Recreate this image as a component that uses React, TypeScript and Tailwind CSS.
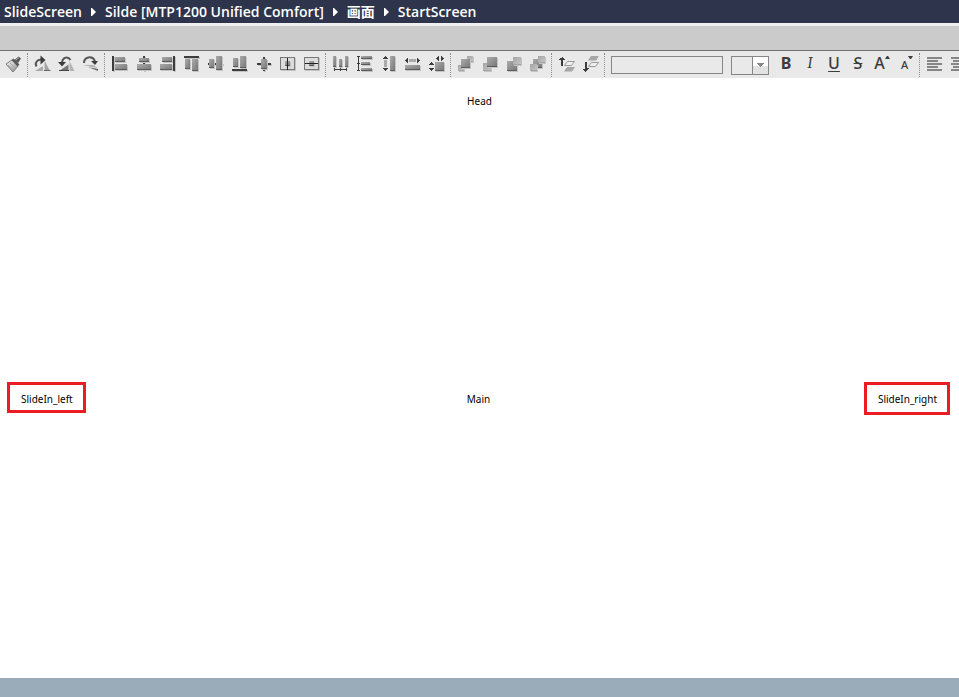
import type { ReactNode } from 'react';

const DARK = '#3c3c3c';

function Block({ x, y, w, h, light }: { x: number; y: number; w: number; h: number; light?: boolean }) {
  return (
    <g>
      <rect x={x + 1} y={y + 1} width={w} height={h} fill="#c4c4c4" />
      <rect x={x} y={y} width={w} height={h} fill={light ? 'url(#pale)' : 'url(#steel)'} />
      <rect x={x} y={y + h - 1} width={w} height={1} fill={light ? '#a4a4a4' : '#5c5c5c'} />
    </g>
  );
}

function Bar({ x, y, w, h }: { x: number; y: number; w: number; h: number }) {
  return (
    <g>
      <rect x={x + 1} y={y + 1} width={w} height={h} fill="#c4c4c4" />
      <rect x={x} y={y} width={w} height={h} fill={DARK} />
    </g>
  );
}

function Tool({ label, children }: { label: string; children: ReactNode }) {
  return (
    <button type="button" aria-label={label} title={label} className="block h-6 w-6 shrink-0">
      <svg viewBox="0 0 24 24" className="block h-6 w-6" shapeRendering="crispEdges" aria-hidden="true">
        {children}
      </svg>
    </button>
  );
}

function Letter({ label, children }: { label: string; children: ReactNode }) {
  return (
    <button
      type="button"
      aria-label={label}
      title={label}
      className="flex h-6 w-6 shrink-0 items-center justify-center text-base leading-6 font-medium text-[#3c3c3c]"
    >
      {children}
    </button>
  );
}

function Divider() {
  return <span className="mr-[3px] ml-px h-6 w-0 shrink-0 self-center border-l border-dotted border-[#8c8c8c]" />;
}

function Chevron() {
  return (
    <svg viewBox="0 0 5 8" className="h-2 w-[5px] shrink-0" fill="#fff" aria-hidden="true">
      <path d="M0 0h1l4 4-4 4H0z" />
    </svg>
  );
}

function Gradients() {
  return (
    <svg className="absolute h-0 w-0" aria-hidden="true">
      <defs>
        <linearGradient id="steel" x1="0" y1="0" x2="1" y2="1">
          <stop offset="0" stopColor="#ababab" />
          <stop offset="1" stopColor="#767676" />
        </linearGradient>
        <linearGradient id="pale" x1="0" y1="0" x2="1" y2="1">
          <stop offset="0" stopColor="#a4a4a4" />
          <stop offset="1" stopColor="#c6c6c6" />
        </linearGradient>
        <linearGradient id="brush" x1="0" y1="0" x2="1" y2="1">
          <stop offset="0" stopColor="#ffffff" />
          <stop offset="1" stopColor="#8a8a8a" />
        </linearGradient>
      </defs>
    </svg>
  );
}

function Toolbar() {
  return (
    <div role="toolbar" aria-label="Format" className="flex h-[27px] items-start overflow-hidden bg-[#e9e9e9] pl-0.5">
      <Tool label="Format painter">
        <g shapeRendering="auto">
          <path d="M4 13l6-4 6 6-5 6z" fill="url(#brush)" stroke="#7a7a7a" />
          <path d="M6 14l5 5M8 12l5 5" stroke="#a6a6a6" />
          <path d="M9.500 9l2-1.500 6 6-2 2z" fill="#5a5a5a" />
          <path d="M12.500 9l4-3.500 2.500 2-3 4.500z" fill="#555" />
          <path d="M14 9l3-2.500" stroke="#aaa" />
        </g>
      </Tool>
      <Divider />
      <Tool label="Rotate right">
        <g shapeRendering="auto">
          <path d="M4 20L12 15v5z" fill="#a9a9a9" />
          <path d="M13.500 9.500V20H19z" fill="#a4a4a4" />
          <path d="M13 19.500h6.500" stroke="#666" />
          <path d="M5.500 15.500C3.500 12 6 8.500 10 8.500" fill="none" stroke="#555" strokeWidth="2" />
          <path d="M9.500 4.500l5 4.500-5 4.500z" fill={DARK} />
        </g>
      </Tool>
      <Tool label="Rotate left">
        <g shapeRendering="auto">
          <path d="M4 20L13.500 13.500V20z" fill="#777" />
          <path d="M14.500 10v10h5z" fill="#b4b4b4" />
          <path d="M4 19.500h10" stroke="#444" />
          <path d="M15.500 9C13 5 8 6 7 11" fill="none" stroke="#555" strokeWidth="2" />
          <path d="M3 11h8l-4 4.500z" fill={DARK} />
        </g>
      </Tool>
      <Tool label="Rotate by angle">
        <g shapeRendering="auto">
          <path d="M4 14h10l5 3z" fill="#ababab" />
          <path d="M9 16L19 18v2z" fill="#666" />
          <path d="M5 12C5 6 13 4 16 10" fill="none" stroke="#555" strokeWidth="2" />
          <path d="M12 10h7l-3 4z" fill={DARK} />
        </g>
      </Tool>
      <Divider />
      <Tool label="Align left">
        <Bar x={4} y={5} w={2} h={15} />
        <Block x={7} y={6} w={10} h={5} />
        <Block x={7} y={13} w={12} h={6} />
      </Tool>
      <Tool label="Align center">
        <Bar x={11} y={5} w={2} h={15} />
        <Block x={7} y={7} w={10} h={4} />
        <Block x={5} y={13} w={14} h={6} />
      </Tool>
      <Tool label="Align right">
        <Bar x={17} y={5} w={2} h={15} />
        <Block x={6} y={6} w={10} h={5} />
        <Block x={4} y={13} w={12} h={6} />
      </Tool>
      <Tool label="Align top">
        <Bar x={4} y={5} w={15} h={2} />
        <Block x={5} y={8} w={5} h={10} />
        <Block x={12} y={8} w={6} h={12} />
      </Tool>
      <Tool label="Align middle">
        <Bar x={4} y={12} w={15} h={2} />
        <Block x={5} y={8} w={5} h={9} />
        <Block x={12} y={5} w={6} h={14} />
      </Tool>
      <Tool label="Align bottom">
        <Block x={5} y={7} w={5} h={9} />
        <Block x={12} y={5} w={6} h={12} />
        <Bar x={4} y={18} w={15} h={2} />
      </Tool>
      <Tool label="Center both ways">
        <Bar x={5} y={12} w={14} h={2} />
        <Bar x={11} y={6} w={2} h={14} />
        <Block x={9} y={8} w={6} h={10} />
      </Tool>
      <Tool label="Center horizontally">
        <rect x="5" y="7" width="15" height="13" fill="#c4c4c4" />
        <rect x="4.500" y="6.500" width="14" height="12" fill="#dcdcdc" stroke="#777" />
        <Block x={9} y={10} w={5} h={5} />
        <rect x="11" y="7" width="1" height="12" fill="#222" />
      </Tool>
      <Tool label="Center vertically">
        <rect x="5" y="7" width="15" height="13" fill="#c4c4c4" />
        <rect x="4.500" y="6.500" width="14" height="12" fill="#dcdcdc" stroke="#777" />
        <Block x={9} y={10} w={5} h={5} />
        <rect x="5" y="12" width="13" height="1" fill="#222" />
      </Tool>
      <Divider />
      <Tool label="Distribute horizontally">
        <Block x={4} y={5} w={3} h={11} />
        <Block x={10} y={8} w={3} h={8} />
        <Block x={16} y={5} w={3} h={11} />
        <path d="M5 18.500h13M5.500 17v3M11.500 17v3M17.500 17v3" stroke={DARK} />
      </Tool>
      <Tool label="Distribute vertically">
        <path d="M5.500 5v15M4 5.500h3M4 12.500h3M4 19.500h3" stroke={DARK} />
        <Block x={8} y={5} w={11} h={3} />
        <Block x={8} y={11} w={9} h={3} />
        <Block x={8} y={17} w={11} h={3} />
      </Tool>
      <Tool label="Same height">
        <rect x="7" y="9" width="3" height="7" fill="#aaa" />
        <path d="M8 5h1v1h1v1h1v1H6V7h1V6h1zM6 17h5v1h-1v1H9v1H8v-1H7v-1H6z" fill={DARK} />
        <Block x={13} y={5} w={5} h={15} />
      </Tool>
      <Tool label="Same width">
        <rect x="8" y="8" width="7" height="3" fill="#aaa" />
        <path d="M4 9h1V8h1V7h1v5H6v-1H5v-1H4zM19 9h-1V8h-1V7h-1v5h1v-1h1v-1h1z" fill={DARK} />
        <Block x={4} y={14} w={15} h={5} />
      </Tool>
      <Tool label="Same size">
        <Block x={10} y={11} w={9} h={9} />
        <path d="M11 7h1V6h1V5h1v5h-1V9h-1V8h-1zM19 7h-1V6h-1V5h-1v5h1V9h1V8h1z" fill={DARK} />
        <path d="M6 11h1v1h1v1h1v1H4v-1h1v-1h1zM4 17h5v1H8v1H7v1H6v-1H5v-1H4z" fill={DARK} />
      </Tool>
      <Divider />
      <Tool label="Bring forward">
        <Block x={13} y={5} w={6} h={6} light />
        <Block x={4} y={14} w={6} h={6} light />
        <Block x={7} y={8} w={9} h={9} />
      </Tool>
      <Tool label="Bring to front">
        <Block x={5} y={12} w={8} h={8} light />
        <Block x={9} y={6} w={10} h={10} />
      </Tool>
      <Tool label="Send to back">
        <Block x={5} y={10} w={10} h={10} />
        <Block x={11} y={6} w={8} h={8} light />
      </Tool>
      <Tool label="Send backward">
        <Block x={7} y={8} w={9} h={9} />
        <Block x={12} y={5} w={7} h={7} light />
        <Block x={4} y={13} w={7} h={7} light />
      </Tool>
      <Divider />
      <Tool label="Layer up">
        <path d="M7 6h1v1h1v1h1v1H8v6H6V9H4V8h1V7h2z" fill={DARK} />
        <g shapeRendering="auto">
          <path d="M12.500 10.500h7l-3 4h-7z" fill="#f0f0f0" stroke="#999" />
          <path d="M12 16h8l-3 4.500H9z" fill="#a6a6a6" />
        </g>
      </Tool>
      <Tool label="Layer down">
        <path d="M6 11h2v6h2v1H9v1H8v1H7v1H6v-1H5v-1H4v-1h2z" fill={DARK} />
        <g shapeRendering="auto">
          <path d="M12 5h8l-3 4.500H9z" fill="#a6a6a6" />
          <path d="M12.500 11.500h7l-3 4h-7z" fill="#f0f0f0" stroke="#999" />
        </g>
      </Tool>
      <Divider />

      <input
        type="text"
        aria-label="Font family"
        className="mt-[5px] ml-[3px] h-[18px] w-28 shrink-0 border border-[#868686] bg-transparent px-1 text-xs outline-none"
      />
      <div className="relative mt-[5px] mr-[5px] ml-2 flex h-[19px] w-[38px] shrink-0 justify-end border border-[#868686]">
        <select aria-label="Font size" className="absolute inset-0 appearance-none bg-transparent text-xs outline-none">
          <option value="" />
          <option>12</option>
        </select>
        <svg
          viewBox="0 0 15 17"
          className="pointer-events-none h-full w-4 border-l border-[#868686] bg-linear-to-b from-white from-50% to-[#e2e2e2] to-50%"
          shapeRendering="crispEdges"
          aria-hidden="true"
        >
          <path d="M4 6h7v1h-1v1H9v1H8v1H7V9H6V8H5V7H4z" fill="#868686" />
        </svg>
      </div>

      <Letter label="Bold"><b>B</b></Letter>
      <Letter label="Italic"><i className="font-serif">I</i></Letter>
      <Letter label="Underline"><span className="underline underline-offset-2">U</span></Letter>
      <Letter label="Strikethrough"><s>S</s></Letter>
      <Letter label="Increase font size">
        A
        <svg viewBox="0 0 5 3" className="mb-3 h-[3px] w-[5px]" fill={DARK} aria-hidden="true"><path d="M0 3l2-3h1l2 3z" /></svg>
      </Letter>
      <Letter label="Decrease font size">
        <span className="pt-1 pl-0.5 text-[11px]">A</span>
        <svg viewBox="0 0 5 3" className="mb-3 h-[3px] w-[5px]" fill={DARK} aria-hidden="true"><path d="M0 0l2 3h1l2-3z" /></svg>
      </Letter>
      <Divider />
      <Tool label="Align text left">
        <path d="M4 7h15M4 10h11M4 13h15M4 16h11M4 19h15" stroke="#868686" strokeWidth="2" />
      </Tool>
      <Tool label="Align text center">
        <path d="M4 7h15M6 10h11M4 13h15M6 16h11M4 19h15" stroke="#868686" strokeWidth="2" />
      </Tool>
    </div>
  );
}

const path = ['SlideScreen', 'Silde [MTP1200 Unified Comfort]', '画面', 'StartScreen'];

export default function App() {
  return (
    <div className="flex min-h-screen flex-col overflow-hidden bg-white font-['Noto_Sans','Noto_Sans_CJK_SC',sans-serif]">
      <Gradients />
      <nav aria-label="Breadcrumb" className="h-[23px] bg-[#2d344b] pl-1">
        <ol className="flex items-center font-['Open_Sans','Noto_Sans_CJK_SC',sans-serif] text-sm leading-[23px] font-semibold whitespace-nowrap text-white">
          {path.map((item, i) => (
            <li key={item} className="flex items-center">
              {i > 0 && <span className="px-[9px]"><Chevron /></span>}
              {item}
            </li>
          ))}
        </ol>
      </nav>
      <div className="h-7 border-t-[3px] border-b border-t-[#efefef] border-b-[#707070] bg-[#cbcbcb]" />
      <Toolbar />
      <main className="flex-1 text-[10px] leading-4 text-black">
        <p className="pt-[15px] text-center">Head</p>
        <div className="mt-[273px] grid grid-cols-[1fr_auto_1fr] items-start pr-[9px] pl-[7px]">
          <div className="justify-self-start border-[3px] border-[#ed1c24] pt-1.5 pr-2.5 pb-[3px] pl-[11px]">SlideIn_left</div>
          <p className="pt-[9px]">Main</p>
          <div className="justify-self-end border-[3px] border-[#ed1c24] pt-1.5 pr-2.5 pb-[5px] pl-[11px]">SlideIn_right</div>
        </div>
      </main>
      <footer className="h-[19px] bg-[#9aacba]" />
    </div>
  );
}
